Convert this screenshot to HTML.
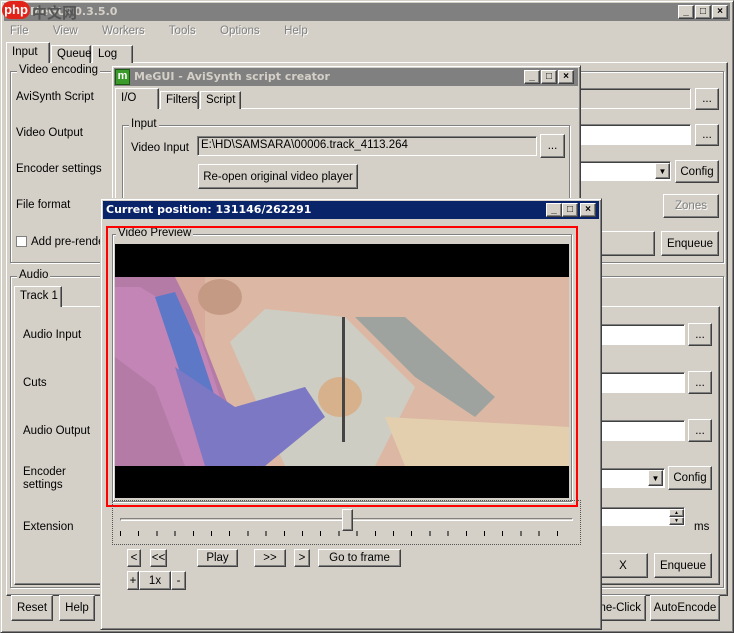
<!DOCTYPE html>
<html><head><meta charset="utf-8">
<style>
*{box-sizing:border-box;margin:0;padding:0}
body{width:734px;height:633px;overflow:hidden;background:#d4d0c8;font:11.5px "Liberation Sans",sans-serif;color:#000;position:relative;white-space:nowrap}
.a{position:absolute}
.win{position:absolute;background:#d4d0c8;border:1px solid;border-color:#d4d0c8 #404040 #404040 #d4d0c8;box-shadow:inset 1px 1px #fff,inset -1px -1px #808080}
.btn{position:absolute;background:#d4d0c8;border:1px solid;border-color:#fff #404040 #404040 #fff;box-shadow:inset -1px -1px #808080;text-align:center;display:flex;align-items:center;justify-content:center}
.tb{position:absolute;background:#fff;border:1px solid;border-color:#808080 #fff #fff #808080;box-shadow:inset 1px 1px #404040;padding:2px 3px;white-space:nowrap;overflow:hidden}
.grp{position:absolute;border:1px solid #808080;box-shadow:inset 1px 1px #fff,1px 1px #fff}
.lg{position:absolute;background:#d4d0c8;padding:0 2px;top:-8px;left:6px}
.tab{position:absolute;background:#d4d0c8;border:1px solid;border-bottom:none;border-color:#fff #404040 #404040 #fff;box-shadow:inset -1px 0 #808080;padding:3px 5px}
.tt{position:absolute;height:18px;color:#fff;font-weight:bold;font-size:12px;line-height:18px;padding-left:3px;font-family:"DejaVu Sans",sans-serif;font-size:11px}
.cb{position:absolute;width:16px;height:14px;background:#d4d0c8;border:1px solid;border-color:#fff #404040 #404040 #fff;box-shadow:inset -1px -1px #808080;font-size:10px;line-height:12px;text-align:center;font-weight:bold}
.dis{color:#808080;text-shadow:1px 1px #fff}
</style></head><body>
<div class="win" style="left:0;top:0;width:734px;height:633px"></div>
<div class="tt" style="left:4px;top:3px;width:726px;background:#808080;color:#d4d0c8">&nbsp;&nbsp;&nbsp;&nbsp;&nbsp;&nbsp;MeGUI 0.3.5.0</div>
<div class="a" style="left:2px;top:1px;width:28px;height:18px;background:#e2231a;border-radius:9px;color:#fff;font-size:13px;font-weight:bold;line-height:18px;text-align:center">php</div>
<div class="a" style="left:32px;top:2px;font-size:15px;font-weight:bold;color:#555;font-family:'Noto Sans CJK SC',sans-serif">中文网</div>
<div class="cb" style="left:678px;top:5px">_</div><div class="cb" style="left:695px;top:5px">□</div><div class="cb" style="left:712px;top:5px">×</div>
<div class="a dis" style="left:10px;top:25px;word-spacing:9px">File&nbsp; View&nbsp; Workers&nbsp; Tools&nbsp; Options&nbsp; Help</div>
<div class="a" style="left:6px;top:62px;width:722px;height:534px;border:1px solid;border-color:#fff #404040 #404040 #fff;box-shadow:inset -1px -1px #808080"></div>
<div class="tab" style="left:6px;top:42px;width:44px;height:21px;z-index:2">Input</div>
<div class="tab" style="left:51px;top:45px;width:40px;height:18px;padding-top:2px">Queue</div>
<div class="tab" style="left:92px;top:45px;width:41px;height:18px;padding-top:2px">Log</div>
<div class="grp" style="left:10px;top:71px;width:714px;height:192px"><div class="lg">Video encoding</div></div>
<div class="a" style="left:16px;top:91px">AviSynth Script</div>
<div class="a" style="left:16px;top:127px">Video Output</div>
<div class="a" style="left:16px;top:163px">Encoder settings</div>
<div class="a" style="left:16px;top:199px">File format</div>
<div class="a" style="left:16px;top:236px"><span style="display:inline-block;width:11px;height:11px;background:#fff;border:1px solid #808080;vertical-align:-2px;margin-right:4px"></span>Add pre-rendering job</div>
<div class="tb" style="left:575px;top:88px;width:116px;height:21px;background:#d4d0c8"></div>
<div class="btn" style="left:695px;top:88px;width:24px;height:22px">...</div>
<div class="tb" style="left:575px;top:124px;width:116px;height:21px"></div>
<div class="btn" style="left:695px;top:124px;width:24px;height:22px">...</div>
<div class="tb" style="left:575px;top:161px;width:96px;height:20px"></div>
<div class="btn" style="left:655px;top:163px;width:15px;height:16px;font-size:8px">▼</div>
<div class="btn" style="left:675px;top:160px;width:44px;height:23px">Config</div>
<div class="btn dis" style="left:663px;top:194px;width:56px;height:24px">Zones</div>
<div class="btn" style="left:575px;top:231px;width:80px;height:25px"></div>
<div class="btn" style="left:661px;top:231px;width:58px;height:25px">Enqueue</div>
<div class="grp" style="left:10px;top:276px;width:714px;height:312px"><div class="lg">Audio</div></div>
<div class="a" style="left:14px;top:306px;width:706px;height:279px;border:1px solid;border-color:#fff #404040 #404040 #fff;box-shadow:inset -1px -1px #808080"></div>
<div class="tab" style="left:14px;top:286px;width:48px;height:21px;z-index:2">Track 1</div>
<div class="a" style="left:23px;top:329px">Audio Input</div>
<div class="a" style="left:23px;top:377px">Cuts</div>
<div class="a" style="left:23px;top:425px">Audio Output</div>
<div class="a" style="left:23px;top:466px;line-height:13px">Encoder<br>settings</div>
<div class="a" style="left:23px;top:521px">Extension</div>
<div class="tb" style="left:575px;top:324px;width:110px;height:21px"></div>
<div class="btn" style="left:688px;top:323px;width:24px;height:23px">...</div>
<div class="tb" style="left:575px;top:372px;width:110px;height:21px"></div>
<div class="btn" style="left:688px;top:371px;width:24px;height:23px">...</div>
<div class="tb" style="left:575px;top:420px;width:110px;height:21px"></div>
<div class="btn" style="left:688px;top:419px;width:24px;height:23px">...</div>
<div class="tb" style="left:575px;top:468px;width:90px;height:20px"></div>
<div class="btn" style="left:648px;top:470px;width:15px;height:16px;font-size:8px">▼</div>
<div class="btn" style="left:668px;top:466px;width:44px;height:24px">Config</div>
<div class="tb" style="left:575px;top:507px;width:110px;height:19px"></div>
<div class="btn" style="left:669px;top:509px;width:15px;height:8px;font-size:5px">▲</div>
<div class="btn" style="left:669px;top:517px;width:15px;height:8px;font-size:5px">▼</div>
<div class="a" style="left:694px;top:521px">ms</div>
<div class="btn" style="left:598px;top:553px;width:50px;height:25px">X</div>
<div class="btn" style="left:654px;top:553px;width:58px;height:25px">Enqueue</div>
<div class="btn" style="left:11px;top:595px;width:42px;height:26px">Reset</div>
<div class="btn" style="left:59px;top:595px;width:36px;height:26px">Help</div>
<div class="btn" style="left:590px;top:595px;width:56px;height:26px;justify-content:flex-end;padding-right:4px">ne-Click</div>
<div class="btn" style="left:650px;top:595px;width:70px;height:26px">AutoEncode</div>

<div class="win" style="left:111px;top:65px;width:470px;height:140px"></div>
<div class="tt" style="left:114px;top:68px;width:464px;background:#808080;color:#d4d0c8;padding-left:20px">MeGUI - AviSynth script creator</div>
<div class="a" style="left:115px;top:69px;width:15px;height:16px;background:#3a9a2a;border:1px solid #1a5a10;color:#fff;font-weight:bold;font-size:11px;line-height:13px;text-align:center">m</div>
<div class="cb" style="left:524px;top:70px">_</div><div class="cb" style="left:541px;top:70px">□</div><div class="cb" style="left:558px;top:70px">×</div>
<div class="a" style="left:115px;top:108px;width:463px;height:100px;border-top:1px solid #fff;border-left:1px solid #fff"></div>
<div class="tab" style="left:115px;top:88px;width:44px;height:21px;z-index:2">I/O</div>
<div class="tab" style="left:160px;top:91px;width:39px;height:18px;padding-top:2px">Filters</div>
<div class="tab" style="left:200px;top:91px;width:41px;height:18px;padding-top:2px">Script</div>
<div class="grp" style="left:122px;top:125px;width:448px;height:80px"><div class="lg">Input</div></div>
<div class="a" style="left:131px;top:142px">Video Input</div>
<div class="tb" style="left:197px;top:136px;width:340px;height:20px;background:#d4d0c8">E:\HD\SAMSARA\00006.track_4113.264</div>
<div class="btn" style="left:540px;top:134px;width:25px;height:24px">...</div>
<div class="btn" style="left:198px;top:164px;width:160px;height:25px">Re-open original video player</div>

<div class="win" style="left:100px;top:198px;width:502px;height:432px"></div>
<div class="tt" style="left:103px;top:201px;width:496px;background:#0a246a">Current position: 131146/262291</div>
<div class="cb" style="left:546px;top:203px">_</div><div class="cb" style="left:562px;top:203px">□</div><div class="cb" style="left:580px;top:203px">×</div>
<div class="grp" style="left:112px;top:234px;width:460px;height:268px"><div class="lg" style="left:3px">Video Preview</div></div>
<div class="a" style="left:115px;top:244px;width:454px;height:254px;background:#000"></div>
<svg class="a" style="left:115px;top:277px" width="454" height="189" viewBox="0 0 454 189">
<rect width="454" height="189" fill="#d8aa9c"/>
<rect x="90" y="0" width="364" height="189" fill="#dcb8a4"/>
<polygon points="150,32 230,40 300,110 260,189 170,189 115,65" fill="#cdcdc4"/>
<polygon points="240,40 290,40 380,120 360,140 300,100" fill="#9ea3a0"/>
<polygon points="270,140 454,150 454,189 290,189" fill="#e3cfae"/>
<polygon points="0,0 60,0 75,30 110,120 140,189 0,189" fill="#b57ba7"/>
<polygon points="0,10 25,10 50,25 85,60 105,120 125,189 70,189 40,110 0,80" fill="#c384b6"/>
<polygon points="40,20 60,15 80,60 100,120 120,140 190,110 200,130 150,189 95,189 70,110" fill="#5e78c8"/>
<polygon points="60,90 120,130 190,110 210,140 150,189 90,189" fill="#7d78c4"/>
<ellipse cx="225" cy="120" rx="22" ry="20" fill="#d7b08c"/>
<ellipse cx="105" cy="20" rx="22" ry="18" fill="#c59a84"/>
<rect x="227" y="40" width="3" height="125" fill="#444"/>
</svg>
<div class="a" style="left:106px;top:226px;width:472px;height:281px;border:2px solid #f00"></div>
<div class="a" style="left:112px;top:500px;width:469px;height:45px;border:1px dotted #555"></div>
<div class="a" style="left:120px;top:518px;width:453px;height:3px;border:1px solid;border-color:#808080 #fff #fff #808080"></div>
<div class="btn" style="left:342px;top:509px;width:11px;height:22px"></div>
<div class="a" style="left:120px;top:531px;width:455px;height:5px;background:repeating-linear-gradient(90deg,#000 0 1px,transparent 1px 18.2px)"></div>
<div class="btn" style="left:127px;top:549px;width:14px;height:18px">&lt;</div>
<div class="btn" style="left:150px;top:549px;width:17px;height:18px">&lt;&lt;</div>
<div class="btn" style="left:197px;top:549px;width:41px;height:18px">Play</div>
<div class="btn" style="left:254px;top:549px;width:32px;height:18px">&gt;&gt;</div>
<div class="btn" style="left:294px;top:549px;width:16px;height:18px">&gt;</div>
<div class="btn" style="left:318px;top:549px;width:83px;height:18px">Go to frame</div>
<div class="btn" style="left:127px;top:571px;width:12px;height:19px">+</div>
<div class="btn" style="left:139px;top:571px;width:32px;height:19px">1x</div>
<div class="btn" style="left:171px;top:571px;width:15px;height:19px">-</div>
</body></html>
